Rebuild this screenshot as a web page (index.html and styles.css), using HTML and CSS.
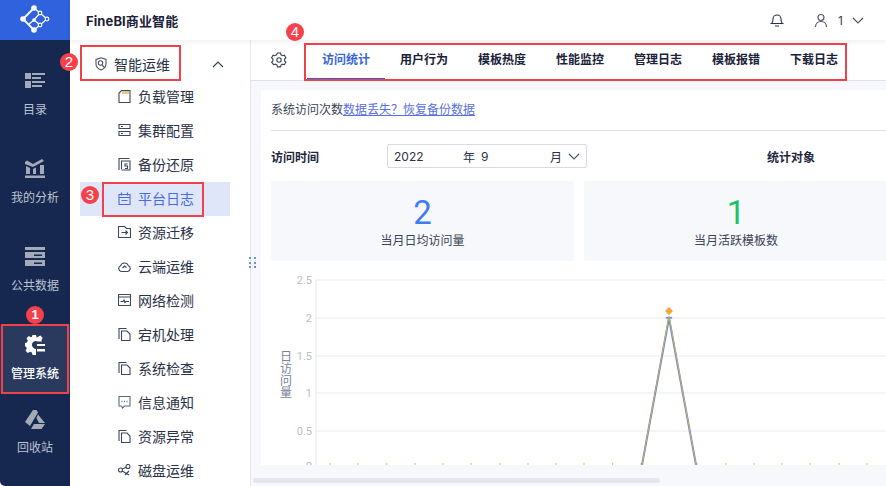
FILE: index.html
```html
<!DOCTYPE html>
<html lang="zh-CN">
<head>
<meta charset="utf-8">
<title>FineBI商业智能</title>
<link rel="stylesheet" href="styles.css">
</head>
<body>
<div class="app">
  <aside class="rail">
    <div class="logo">
      <svg width="30" height="30" viewBox="0 0 30 30" fill="none" stroke="#fff">
        <path d="M14 3 3 14l11 11" stroke-width="1.800"/>
        <path d="M14 3l6 5 7 6-7 6-6 5M8.500 19.500 14 15l6-7M14 15l6 5" stroke-width="1.200"/>
        <circle cx="14" cy="3" r="2.800" fill="#fff" stroke="none"/>
        <circle cx="3" cy="14" r="2.800" fill="#fff" stroke="none"/>
        <circle cx="14" cy="25" r="2.800" fill="#fff" stroke="none"/>
        <circle cx="14" cy="15" r="1.800" fill="#fff" stroke="none"/>
        <circle cx="20" cy="8" r="1.800" fill="#2f62dc" stroke-width="1.200"/>
        <circle cx="27" cy="14" r="1.800" fill="#2f62dc" stroke-width="1.200"/>
        <circle cx="20" cy="20" r="1.800" fill="#2f62dc" stroke-width="1.200"/>
      </svg>
    </div>
    <nav class="rail-nav">
      <a class="rail-item">
        <svg class="rail-icon" width="20" height="18" viewBox="0 0 20 18"><path d="M0 1h6v6H0zM7 1h13v2H7zM7 5h9v2H7zM0 9h6v7H0zM7 9h13v2H7zM7 13h10v2H7z" fill="#a3aab8"/></svg>
        <span>目录</span>
      </a>
      <a class="rail-item">
        <svg class="rail-icon" width="20" height="20" viewBox="0 0 20 20"><path d="M0 3l2-1.500 6 3.500 9-5 2 2-11 6L0 5zM1 7l4 2v6H1zM8 10l3-1.500V15H8zM15 6h4v9h-4zM0 16.500h20V19H0z" fill="#a3aab8"/></svg>
        <span>我的分析</span>
      </a>
      <a class="rail-item">
        <svg class="rail-icon" width="20" height="20" viewBox="0 0 20 20"><path d="M0 0h20v3H0zM0 5h20v6H0zM0 13h20v6H0z" fill="#a3aab8"/><path d="M9 7.500h8v1.500H9zM9 15.500h8V17H9z" fill="#172850"/></svg>
        <span>公共数据</span>
      </a>
      <a class="rail-item rail-item-active">
        <svg class="rail-icon" width="20" height="20" viewBox="0 0 20 20"><path d="M7.500 0h3.500l.6 2.400 2-.8 1.800-1 2.300 2.300-1.300 2.200.5 1.400H13a4 4 0 1 0-2 7.400V20H7.500l-.6-2.500-1.900-.8-2.200 1.300L.5 15.700l1.300-2.200-.8-1.900L0 11.500V8l2-.6.800-1.900L1.500 3.300 3.800 1 6 2.300l1-.5z" fill="#fff"/><path d="M12 9h8v2h-8zM12 14h8v2.500h-8z" fill="#fff"/></svg>
        <span>管理系统</span>
      </a>
      <a class="rail-item rail-item-last">
        <svg class="rail-icon" width="20" height="20" viewBox="0 0 20 20"><path d="M8 1h3.500L13 3.500 5 17 0 13z" fill="#a3aab8"/><path d="M13 5.500 20 14h-6l-2.600-5z" fill="#a3aab8"/><path d="M9 15h11l-3.500 5H6z" fill="#a3aab8"/></svg>
        <span>回收站</span>
      </a>
    </nav>
  </aside>

  <div class="main">
    <header class="topbar">
      <h1 class="brand">FineBI商业智能</h1>
      <div class="top-actions">
        <svg width="14" height="14" viewBox="0 0 14 14" fill="none" stroke="#27304a" stroke-width="1.100"><path d="M1.500 10.500c1.500-1 1.500-2 1.500-4.500a4 4 0 0 1 8 0c0 2.500 0 3.500 1.500 4.500zM5 13h4"/></svg>
        <div class="user">
          <svg width="14" height="15" viewBox="0 0 14 15" fill="none" stroke="#4a5264" stroke-width="1.100"><circle cx="7" cy="4.500" r="3"/><path d="M1.500 14c0-3.500 2.500-5.500 5.500-5.500s5.500 2 5.500 5.500"/></svg>
          <span class="user-name">1</span>
          <svg width="12" height="7" viewBox="0 0 12 7" fill="none" stroke="#4a5264" stroke-width="1.100"><path d="M1 1l5 5 5-5"/></svg>
        </div>
      </div>
    </header>

    <div class="body">
      <aside class="side">
        <div class="side-head">
          <svg class="ico" width="14" height="14" viewBox="0 0 14 14" fill="none" stroke="#4a5264" stroke-width="1.100"><path d="M7 .8l5 1.700V7c0 3-2.500 5-5 6-2.500-1-5-3-5-6V2.500z"/><circle cx="6.500" cy="6" r="2.200"/><path d="M8 8l2.500 2.500"/></svg>
          <span class="side-title">智能运维</span>
          <svg class="caret" width="12" height="7" viewBox="0 0 12 7" fill="none" stroke="#3a4256" stroke-width="1.200"><path d="M1 6l5-5 5 5"/></svg>
        </div>
        <ul class="side-list">
          <li class="side-item">
            <svg width="12" height="13" viewBox="0 0 12 13" fill="none" stroke="#3d4660" stroke-width="1.100"><path d="M3 .5h8.500v12H.5V3z"/><path d="M3.500 1h7v3h-7z" fill="#e8c98a" stroke="none"/></svg>负载管理
          </li>
          <li class="side-item">
            <svg width="12" height="12" viewBox="0 0 12 12" fill="none" stroke="#3d4660" stroke-width="1.100"><path d="M.5.500h11v4H.5zM.5 7.500h11v4H.5zM2.500 2.500h2M2.500 9.500h2"/></svg>集群配置
          </li>
          <li class="side-item">
            <svg width="12" height="13" viewBox="0 0 12 13" fill="none" stroke="#3d4660" stroke-width="1.100"><path d="M11 .5H.5V12M3 11V3h8.500v9H3"/><path d="M9 6H6.500v2H9v2.500H6.500"/></svg>备份还原
          </li>
          <li class="side-item side-item-active">
            <svg width="12" height="13" viewBox="0 0 12 13" fill="none" stroke="#4a6be0" stroke-width="1.100"><path d="M.5 2.500h11v10H.5zM3 .5v3M9 .5v3M.5 5.500h11M3 8.500h6"/></svg>平台日志
          </li>
          <li class="side-item">
            <svg width="13" height="12" viewBox="0 0 13 12" fill="none" stroke="#3d4660" stroke-width="1.100"><path d="M.5.500h6l2 2h4v9H.5zM3.500 6.500h6M7.500 4.500l2 2-2 2"/></svg>资源迁移
          </li>
          <li class="side-item">
            <svg width="13" height="12" viewBox="0 0 13 12" fill="none" stroke="#3d4660" stroke-width="1.100"><path d="M3.500 11.500a3 3 0 0 1-.8-5.800 4 4 0 0 1 7.600 0 3 3 0 0 1-.8 5.800z"/><path d="M4.500 8l2-2 2 1.500" stroke-width="1.300"/></svg>云端运维
          </li>
          <li class="side-item">
            <svg width="13" height="12" viewBox="0 0 13 12" fill="none" stroke="#3d4660" stroke-width="1.100"><path d="M.5.500h12v11H.5zM.5 3h12M2.500 7.500h2.500l1-1.500 1 2.500 1-1h3"/></svg>网络检测
          </li>
          <li class="side-item">
            <svg width="12" height="13" viewBox="0 0 12 13" fill="none" stroke="#3d4660" stroke-width="1.100"><path d="M8 .5H.5V11M3 12.500V3h5.500l3 3v6.500z"/></svg>宕机处理
          </li>
          <li class="side-item">
            <svg width="12" height="13" viewBox="0 0 12 13" fill="none" stroke="#3d4660" stroke-width="1.100"><path d="M8 .5H.5V11M3 12.500V3h5.500l3 3v6.500z"/></svg>系统检查
          </li>
          <li class="side-item">
            <svg width="12" height="13" viewBox="0 0 12 13" fill="none" stroke="#5a6a80" stroke-width="1.100"><path d="M.5.500h11v9.500H6l-2 2-1-2H.5z"/><path d="M3 5.500h1M5.500 5.500h1M8 5.500h1" stroke-width="1.300"/></svg>信息通知
          </li>
          <li class="side-item">
            <svg width="12" height="13" viewBox="0 0 12 13" fill="none" stroke="#3d4660" stroke-width="1.100"><path d="M8 .5H.5V11M3 12.500V3h5.500l3 3v6.500z"/></svg>资源异常
          </li>
          <li class="side-item">
            <svg width="13" height="12" viewBox="0 0 13 12" fill="none" stroke="#3d4660" stroke-width="1.100"><circle cx="2.500" cy="6" r="2"/><circle cx="10" cy="2.500" r="2"/><path d="M4.200 5l4-1.800M4.200 7l6.800 4M11 7l-4 4"/></svg>磁盘运维
          </li>
        </ul>
      </aside>

      <section class="content">
        <div class="tabbar">
          <div class="tab-gear">
            <svg width="16" height="16" viewBox="0 0 16 16" fill="none" stroke="#3a4256" stroke-width="1.100"><path d="M6.500 1.500h3l.5 1.800 1.600.9 1.800-.5 1.500 2.600-1.300 1.200v1.900l1.300 1.200-1.500 2.600-1.800-.5-1.600.9-.5 1.800h-3l-.5-1.800-1.600-.9-1.800.5L.6 10.600l1.300-1.200V7.500L.6 6.300l1.500-2.600 1.800.5 1.600-.9z" transform="translate(0 -.5)"/><circle cx="8" cy="8" r="2.200"/></svg>
          </div>
          <a class="tab tab-active">访问统计</a>
          <a class="tab">用户行为</a>
          <a class="tab">模板热度</a>
          <a class="tab">性能监控</a>
          <a class="tab">管理日志</a>
          <a class="tab">模板报错</a>
          <a class="tab">下载日志</a>
        </div>

        <div class="stage">
          <div class="panel">
            <p class="note">系统访问次数<a class="note-link">数据丢失？恢复备份数据</a></p>
            <div class="filters">
              <span class="filter-label">访问时间</span>
              <div class="date">
                <span class="date-year">2022</span>
                <span class="date-unit">年</span>
                <span class="date-month">9</span>
                <span class="date-unit">月</span>
                <svg class="date-caret" width="12" height="7" viewBox="0 0 12 7" fill="none" stroke="#4a5264" stroke-width="1.100"><path d="M1 1l5 5 5-5"/></svg>
              </div>
              <span class="filter-label filter-target">统计对象</span>
            </div>
            <div class="cards">
              <div class="card">
                <div class="card-num card-blue">2</div>
                <div class="card-label">当月日均访问量</div>
              </div>
              <div class="card">
                <div class="card-num card-green">1</div>
                <div class="card-label">当月活跃模板数</div>
              </div>
            </div>
            <svg class="chart" width="615" height="204" viewBox="0 0 615 204">
              <g class="grid">
                <path d="M45 19H615M45 57H615M45 95H615M45 132H615M45 170H615M45 19V204"/>
              </g>
              <g class="ticks">
                <text x="41" y="23">2.5</text>
                <text x="41" y="61">2</text>
                <text x="41" y="99">1.5</text>
                <text x="41" y="136">1</text>
                <text x="41" y="174">0.5</text>
                <text x="41" y="209">0</text>
              </g>
              <text class="axis-title" x="15" y="89">日访问量</text>
              <path d="M59 202v2M87 202v2M115.700 202v2M144 202v2M172 202v2M200 202v2M229 202v2M257 202v2M285 202v2M313 202v2M341.600 202v2M370 202v2M426 202v2M455 202v2M483 202v2M511 202v2M539 202v2M568 202v2M596 202v2" stroke="#f5b041" fill="none"/>
              <path d="M371 204 398 57l27 147" stroke="#4f8ff0" stroke-width="2" fill="none"/>
              <path d="M371 204 398 55l27 149" stroke="#e9a93a" stroke-width="1" fill="none"/>
              <path d="M394.500 57l1.500-1.500 2 1.500 2-1.500 1.500 1.500-1.500 1-2-1-2 1z" fill="#4f8ff0"/>
              <path d="M398 46l4 4-4 4-4-4z" fill="#f7a63c"/>
            </svg>
          </div>
          <div class="hscroll"><div class="hscroll-thumb"></div></div>
        </div>
      </section>
    </div>
  </div>

  <div class="grip"><i></i><i></i><i></i><i></i><i></i><i></i></div>

  <div class="mark mark-rail"></div>
  <div class="mark mark-head"></div>
  <div class="mark mark-active"></div>
  <div class="mark mark-tabs"></div>
  <span class="badge badge-1">1</span>
  <span class="badge badge-2">2</span>
  <span class="badge badge-3">3</span>
  <span class="badge badge-4">4</span>
</div>
</body>
</html>
```

FILE: styles.css
```css
* { box-sizing: border-box; }
html, body { margin: 0; padding: 0; }
body {
  width: 886px;
  height: 486px;
  overflow: hidden;
  background: #fff;
  font-family: "Inter", "Noto Sans CJK SC", sans-serif;
  font-size: 12px;
  color: #1f2740;
}
.app {
  position: relative;
  display: flex;
  width: 886px;
  height: 486px;
  overflow: hidden;
}

/* left rail */
.rail {
  flex: 0 0 70px;
  background: #172850;
  border-bottom-left-radius: 5px;
}
.logo {
  height: 40px;
  background: #2f62dc;
  display: flex;
  align-items: center;
  justify-content: center;
}
.rail-nav {
  display: flex;
  flex-direction: column;
  gap: 20px;
  padding-top: 21px;
}
.rail-item {
  height: 68px;
  display: flex;
  flex-direction: column;
  align-items: center;
  padding-top: 10px;
  color: #bcc3d0;
  font-size: 12px;
  line-height: 18px;
}
.rail-icon { height: 20px; margin-bottom: 10px; }
.rail-item-active { background: #2a3a5f; color: #fff; font-weight: 500; }
.rail-item-last { margin-top: -14px; }

/* main */
.main {
  flex: 1;
  min-width: 0;
  display: flex;
  flex-direction: column;
}
.topbar {
  position: relative;
  z-index: 2;
  flex: 0 0 40px;
  display: flex;
  align-items: center;
  padding: 0 22px 0 16px;
  background: #fff;
  box-shadow: 0 2px 5px rgba(30, 40, 70, .07);
}
.brand {
  margin: 0;
  font-size: 13px;
  font-weight: 700;
  color: #1a2138;
  letter-spacing: .1px;
}
.top-actions {
  margin-left: auto;
  display: flex;
  align-items: center;
  gap: 30px;
}
.user { display: flex; align-items: center; gap: 9px; }
.user-name { font-size: 12px; color: #3a4256; margin-left: 1px; }

.body { flex: 1; display: flex; min-height: 0; }

/* side menu */
.side {
  flex: 0 0 181px;
  padding-left: 10px;
  padding-top: 7px;
  border-right: 1px solid #e6e8ef;
  overflow: hidden;
}
.side-head {
  display: flex;
  align-items: center;
  width: 150px;
  height: 34px;
  padding-left: 14px;
}
.side-title { margin-left: 6px; font-size: 14px; color: #2a3146; }
.caret { margin-left: auto; margin-right: 6px; }
.side-list { list-style: none; margin: -1px 0 0; padding: 0; width: 150px; }
.side-item {
  height: 34px;
  display: flex;
  align-items: center;
  gap: 7px;
  padding-left: 38px;
  padding-bottom: 2px;
  font-size: 14px;
  color: #2a3146;
}
.side-item svg { flex: 0 0 13px; width: 13px; }
.side-item-active { background: #dfe6f9; color: #4a6be0; }

/* content */
.content {
  flex: 1;
  min-width: 0;
  display: flex;
  flex-direction: column;
  overflow: hidden;
}
.tabbar {
  flex: 0 0 41px;
  display: flex;
  background: #fff;
  border-bottom: 1px solid #e0e2ea;
}
.tab-gear {
  flex: 0 0 56px;
  display: flex;
  align-items: center;
  justify-content: center;
}
.tab {
  flex: 0 0 78px;
  height: 40px;
  line-height: 40px;
  text-align: center;
  font-size: 12px;
  font-weight: 700;
  color: #1a2138;
}
.tab-active { color: #3a66d8; border-bottom: 2px solid #2f62dc; }

.stage {
  flex: 1;
  display: flex;
  flex-direction: column;
  min-height: 0;
  padding: 9px 0 0 10px;
  background: #f7f8fc;
}
.panel {
  flex: 0 0 375px;
  height: 375px;
  overflow: hidden;
  padding-left: 10px;
  background: #fff;
}
.note {
  margin: 0;
  height: 41px;
  line-height: 40px;
  border-bottom: 1px solid #dfe1e8;
  font-size: 12px;
  color: #3a4256;
}
.note-link { color: #5a70e0; text-decoration: underline; }
.filters {
  display: flex;
  align-items: center;
  height: 26px;
  margin-top: 12px;
}
.filter-label { flex: 0 0 116px; font-weight: 700; font-size: 12px; color: #1f2740; }
.filter-target { margin-left: 180px; }
.date {
  flex: 0 0 200px;
  height: 24px;
  display: flex;
  align-items: center;
  padding: 0 6px;
  border: 1px solid #d8dae3;
  border-radius: 2px;
  color: #2a3146;
}
.date-year { width: 69px; }
.date-unit { width: 18px; }
.date-month { width: 69px; }
.cards {
  display: flex;
  gap: 10px;
  margin-top: 12px;
  width: 617px;
}
.card {
  flex: 0 0 auto;
  width: 303px;
  height: 80px;
  padding-top: 14px;
  background: #f7f8fc;
  text-align: center;
}
.card + .card { width: 304px; }
.card-num { font-size: 33px; line-height: 36px; font-family: "Roboto", sans-serif; }
.card-blue { color: #3f7cf0; }
.card-green { color: #17c46a; }
.card-label { margin-top: 1px; font-size: 12px; line-height: 18px; color: #3a4256; }
.chart { display: block; }
.grid path { stroke: #e8e9ed; stroke-width: 1.100; fill: none; }
.ticks text {
  font: 11px "Roboto", sans-serif;
  fill: #b9bcc4;
  text-anchor: end;
}
.axis-title {
  font: 12px "Noto Sans CJK SC", sans-serif;
  fill: #7b8496;
  writing-mode: vertical-rl;
  text-orientation: upright;
}

.hscroll { flex: 1; position: relative; margin-left: -8px; }
.hscroll-thumb {
  position: absolute;
  left: 0;
  top: 13px;
  width: 407px;
  height: 5px;
  border-radius: 3px;
  background: #e5e6eb;
}

/* overlays */
.grip {
  position: absolute;
  left: 249px;
  top: 257px;
  width: 7px;
  height: 11px;
  display: grid;
  grid-template-columns: 2px 2px;
  justify-content: space-between;
  align-content: space-between;
}
.grip i { width: 2px; height: 2px; background: #6f92d8; }
.mark {
  position: absolute;
  border: 2px solid #f0404a;
  pointer-events: none;
  z-index: 5;
}
.mark-rail { left: 1px; top: 324px; width: 68px; height: 70px; }
.mark-head { left: 80px; top: 45px; width: 101px; height: 36px; }
.mark-active { left: 102px; top: 182px; width: 102px; height: 35px; }
.mark-tabs { left: 304px; top: 43px; width: 543px; height: 38px; }
.badge {
  position: absolute;
  z-index: 6;
  width: 18px;
  height: 18px;
  border-radius: 50%;
  background: #f5414a;
  color: #fff;
  font: 400 15px/18px "Liberation Sans", sans-serif;
  text-align: center;
}
.badge-1 { left: 26px; top: 306px; font-weight: 700; font-size: 13px; }
.badge-2 { left: 60px; top: 53px; }
.badge-3 { left: 81px; top: 186px; }
.badge-4 { left: 286px; top: 23px; }
```
